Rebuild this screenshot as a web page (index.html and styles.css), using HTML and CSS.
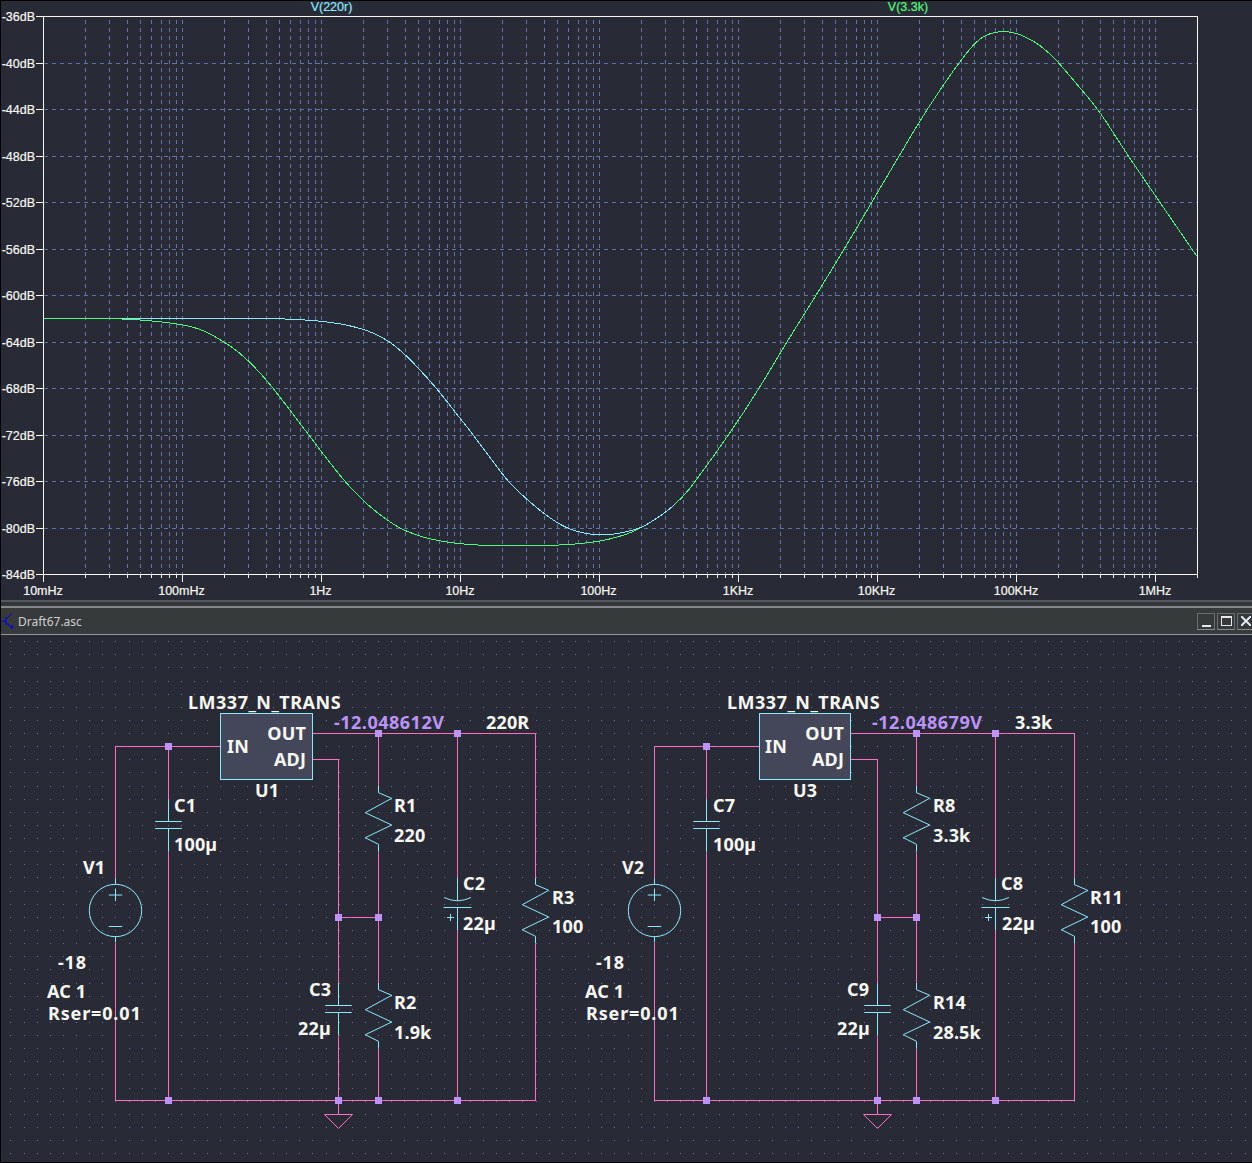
FILE: index.html
```html
<!DOCTYPE html>
<html lang="en">
<head>
  <meta charset="UTF-8">
  <title>Draft67.asc</title>
  <link rel="stylesheet" href="styles.css">
</head>
<body>
  <div class="page">
    <!-- waveform pane -->
    <svg class="plot" viewBox="1 1 1251 599" width="1251" height="599">
      <defs>
        <g id="decade">
          <path class="grid" d="M41.8 20V574M66.3 20V574M83.7 20V574M97.2 20V574M108.1 20V574M117.5 20V574M125.5 20V574M132.6 20V574M139 20V574"/>
          <path class="axis" d="M41.8 574V578M66.3 574V578M83.7 574V578M97.2 574V578M108.1 574V578M117.5 574V578M125.5 574V578M132.6 574V578M139 574V582"/>
        </g>
      </defs>

      <path class="grid" d="M44 63.5H1197M44 109.5H1197M44 156.5H1197M44 202.5H1197M44 249.5H1197M44 295.5H1197M44 342.5H1197M44 388.5H1197M44 435.5H1197M44 481.5H1197M44 528.5H1197"/>
      <use href="#decade" x="43.5"/>
      <use href="#decade" x="182.5"/>
      <use href="#decade" x="321.5"/>
      <use href="#decade" x="460.5"/>
      <use href="#decade" x="599.5"/>
      <use href="#decade" x="738.5"/>
      <use href="#decade" x="877.5"/>
      <use href="#decade" x="1016.5"/>
      <path class="axis" d="M1197.5 574V578M43.5 574V582"/>
      <path class="grid" d="M1155.5 20V574"/>
      <rect class="axis" x="43.5" y="16.5" width="1154" height="558"/>
      <path class="axis" d="M36 16.5H43M36 63.5H43M36 109.5H43M36 156.5H43M36 202.5H43M36 249.5H43M36 295.5H43M36 342.5H43M36 388.5H43M36 435.5H43M36 481.5H43M36 528.5H43M36 574.5H43"/>

      <path class="trace trace-green" d="M44 318.5L100 318.5Q121 318.7 138 319.85Q155 321 169.15 322.85Q183.3 324.7 193.3 327.35Q203.3 330 214.15 336.15Q225 342.3 232.5 347.65Q240 353 248.35 361Q256.7 369 265 378.65Q273.3 388.3 282.15 399.9Q291 411.5 300.15 423.6Q309.3 435.7 318.15 447.35Q327 459 336 470.35Q345 481.7 352.5 489.6Q360 497.5 368 504.75Q376 512 386.35 519.5Q396.7 527 406.7 531.15Q416.7 535.3 425 537.5Q433.3 539.7 441.65 541.2Q450 542.7 458.35 543.5Q466.7 544.3 473.35 544.8Q480 545.3 520 545.3Q560 545.3 568.35 544.65Q576.7 544 588.35 542.65Q600 541.3 608.35 539.3Q616.7 537.3 625 534.65Q633.3 532 641.65 527.35Q650 522.7 658.35 517.2Q666.7 511.7 675 504.2Q683.3 496.7 689.15 489.2Q695 481.7 711.65 458.7Q728.3 435.7 743.8 412Q759.3 388.3 772.9 365.3Q786.5 342.3 801.25 318.9Q816 295.5 830 272.5Q844 249.5 857.85 226Q871.7 202.5 885.35 179.25Q899 156 912.85 132.75Q926.7 109.5 942.5 86.4Q958.3 63.3 967.5 52Q976.7 40.7 983.35 36.85Q990 33 996.65 32.15Q1003.3 31.3 1010 32.15Q1016.7 33 1025 36.85Q1033.3 40.7 1040 45.7Q1046.7 50.7 1053 57Q1059.3 63.3 1069.65 75.65Q1080 88 1089.15 98.65Q1098.3 109.3 1113.3 132.8Q1128.3 156.3 1144.15 179.3Q1160 202.3 1176 225.8Q1192 249.3 1196.7 256"/>
      <path class="trace trace-cyan" d="M121 318.5L260 318.5Q286.7 318.8 303.35 319.9Q320 321 330 322.35Q340 323.7 348.35 325.5Q356.7 327.3 365 330Q373.3 332.7 381.65 337.2Q390 341.7 398.35 348.85Q406.7 356 413.35 363Q420 370 428.35 379.15Q436.7 388.3 445.85 400.15Q455 412 464.5 423.85Q474 435.7 482.5 447.35Q491 459 499.65 470.35Q508.3 481.7 514.15 487.35Q520 493 526.65 499Q533.3 505 541.65 511.65Q550 518.3 558.35 523.3Q566.7 528.3 575 530.8Q583.3 533.3 591.65 534.3Q600 535.3 608.35 534.65Q616.7 534 625 532Q633.3 530 641.65 527.35Q650 522.7 658.35 517.2Q666.7 511.7 675 504.2"/>

      <text class="plot-label trace-label-cyan" x="331.5" y="11" text-anchor="middle">V(220r)</text>
      <text class="plot-label trace-label-green" x="908" y="11" text-anchor="middle">V(3.3k)</text>

      <g class="plot-label" text-anchor="end">
        <text x="35" y="21">-36dB</text>
        <text x="35" y="68">-40dB</text>
        <text x="35" y="114">-44dB</text>
        <text x="35" y="161">-48dB</text>
        <text x="35" y="207">-52dB</text>
        <text x="35" y="254">-56dB</text>
        <text x="35" y="300">-60dB</text>
        <text x="35" y="347">-64dB</text>
        <text x="35" y="393">-68dB</text>
        <text x="35" y="440">-72dB</text>
        <text x="35" y="486">-76dB</text>
        <text x="35" y="533">-80dB</text>
        <text x="35" y="579">-84dB</text>
      </g>
      <g class="plot-label" text-anchor="middle">
        <text x="43" y="595">10mHz</text>
        <text x="181.5" y="595">100mHz</text>
        <text x="320.5" y="595">1Hz</text>
        <text x="460" y="595">10Hz</text>
        <text x="598.5" y="595">100Hz</text>
        <text x="738" y="595">1KHz</text>
        <text x="876.5" y="595">10KHz</text>
        <text x="1016" y="595">100KHz</text>
        <text x="1155" y="595">1MHz</text>
      </g>
    </svg>

    <div class="splitter"></div>

    <div class="titlebar">
      <svg class="app-icon" viewBox="0 0 14 18" width="14" height="18">
        <path d="M1 9H5M5 5V13M5 7L11 1M5 11L12 16M12 16L9 15.6M12 16L11 13"/>
      </svg>
      <span class="doc-name">Draft67.asc</span>
      <div class="win-buttons">
        <div class="win-btn"><span class="glyph-min"></span></div>
        <div class="win-btn"><span class="glyph-max"></span></div>
        <div class="win-btn">
          <svg class="glyph-close" viewBox="0 0 10 10" width="10" height="10"><path d="M0 0L10 10M10 0L0 10"/></svg>
        </div>
      </div>
    </div>

    <!-- schematic pane -->
    <svg class="schematic" viewBox="1 635 1251 527" width="1251" height="527">
      <defs>
        <rect id="junction" class="junction" x="-3.5" y="-3.5" width="7" height="7"/>
        <path id="resistor" class="part" d="M0 0V6.7L13.2 12.3L-13.2 26.7L13.2 39L-13.2 51.7L0 58.3V65.6"/>
        <path id="cap" class="part" d="M0 0V22M-13.3 22H13.3M-13.3 29H13.3M0 29V52"/>
        <path id="polar-cap" class="part" d="M0 0V22.7M-13.5 19.5Q0 26 13.5 19.5M-14 29.5H14M0 29.5V52M-10.5 39.5H-3.5M-7 36V43"/>
        <g id="source" class="part">
          <circle r="26.2"/>
          <path d="M0 -32V-26M0 26V32M-6.7 -15.5H6.7M0 -22V-9.5M-6.7 16H6.7"/>
        </g>
        <path id="ground" class="wire" d="M0 0V14M-14 14H14L0 28Z"/>
      </defs>

      <!-- grid dots, one dashed row per grid step -->
      <path class="dots" d="M10.4 641.6H1252M10.4 654.7H1252M10.4 667.9H1252M10.4 681H1252M10.4 694.1H1252M10.4 707.3H1252M10.4 720.4H1252M10.4 733.5H1252M10.4 746.6H1252M10.4 759.8H1252M10.4 772.9H1252M10.4 786H1252M10.4 799.2H1252M10.4 812.3H1252M10.4 825.4H1252M10.4 838.6H1252M10.4 851.7H1252M10.4 864.8H1252M10.4 877.9H1252M10.4 891.1H1252M10.4 904.2H1252M10.4 917.3H1252M10.4 930.5H1252M10.4 943.6H1252M10.4 956.7H1252M10.4 969.9H1252M10.4 983H1252M10.4 996.1H1252M10.4 1009.2H1252M10.4 1022.4H1252M10.4 1035.5H1252M10.4 1048.6H1252M10.4 1061.8H1252M10.4 1074.9H1252M10.4 1088H1252M10.4 1101.2H1252M10.4 1114.3H1252M10.4 1127.4H1252M10.4 1140.6H1252M10.4 1153.7H1252"/>

      <!-- 220R stage -->
      <path class="wire" d="M115.5 878.5V746.5H220.5M115.5 942.5V1100.5H535.5V943.6M535.5 878V733.5H312.5M168.5 746.5V799.5M168.5 851.5V1100.5M312.5 759.5H338.5V983.5M338.5 1035.5V1100.5M378.5 733.5V786M378.5 851.6V983M378.5 1048.6V1100.5M338.5 917.5H378.5M457.5 733.5V878M457.5 930V1100.5"/>
      <use href="#source" x="115.5" y="910.5"/>
      <use href="#cap" x="168.5" y="799.5"/>
      <use href="#cap" x="338.5" y="983.5"/>
      <use href="#polar-cap" x="457.5" y="878"/>
      <use href="#resistor" x="378.5" y="786"/>
      <use href="#resistor" x="378.5" y="983"/>
      <use href="#resistor" x="535.5" y="878"/>
      <use href="#ground" x="338.5" y="1100.5"/>
      <rect class="regulator" x="220.5" y="713.5" width="92" height="66"/>
      <use href="#junction" x="168.5" y="746.5"/>
      <use href="#junction" x="378.5" y="733.5"/>
      <use href="#junction" x="457.5" y="733.5"/>
      <use href="#junction" x="338.5" y="917.5"/>
      <use href="#junction" x="378.5" y="917.5"/>
      <use href="#junction" x="168.5" y="1100.5"/>
      <use href="#junction" x="338.5" y="1100.5"/>
      <use href="#junction" x="378.5" y="1100.5"/>
      <use href="#junction" x="457.5" y="1100.5"/>
      <g class="sch-text">
        <text class="wide" x="188" y="709">LM337_N_TRANS</text>
        <text x="227" y="753">IN</text>
        <text x="306" y="740" text-anchor="end">OUT</text>
        <text x="306" y="766" text-anchor="end">ADJ</text>
        <text x="255" y="797">U1</text>
        <text x="174" y="812">C1</text>
        <text x="174" y="851">100µ</text>
        <text x="83" y="874">V1</text>
        <text x="486" y="729">220R</text>
        <text x="394" y="812">R1</text>
        <text x="394" y="842">220</text>
        <text x="463" y="890">C2</text>
        <text x="463" y="930">22µ</text>
        <text x="552" y="904">R3</text>
        <text x="552" y="933">100</text>
        <text class="wider" x="58" y="969">-18</text>
        <text x="47" y="998">AC 1</text>
        <text class="wider" x="48" y="1020">Rser=0.01</text>
        <text x="309" y="996">C3</text>
        <text x="298" y="1035">22µ</text>
        <text x="394" y="1009">R2</text>
        <text x="394" y="1039">1.9k</text>
      </g>
      <text class="sch-text node-volts wide" x="334" y="729">-12.048612V</text>

      <!-- 3.3k stage -->
      <path class="wire" d="M654.5 878.5V746.5H759.5M654.5 942.5V1100.5H1074.5V943.6M1074.5 878V733.5H850.5M706.5 746.5V799.5M706.5 851.5V1100.5M850.5 759.5H877.5V983.5M877.5 1035.5V1100.5M916.5 733.5V786M916.5 851.6V983M916.5 1048.6V1100.5M877.5 917.5H916.5M995.5 733.5V878M995.5 930V1100.5"/>
      <use href="#source" x="654.5" y="910.5"/>
      <use href="#cap" x="706.5" y="799.5"/>
      <use href="#cap" x="877.5" y="983.5"/>
      <use href="#polar-cap" x="995.5" y="878"/>
      <use href="#resistor" x="916.5" y="786"/>
      <use href="#resistor" x="916.5" y="983"/>
      <use href="#resistor" x="1074.5" y="878"/>
      <use href="#ground" x="877.5" y="1100.5"/>
      <rect class="regulator" x="759.5" y="713.5" width="91" height="66"/>
      <use href="#junction" x="706.5" y="746.5"/>
      <use href="#junction" x="916.5" y="733.5"/>
      <use href="#junction" x="995.5" y="733.5"/>
      <use href="#junction" x="877.5" y="917.5"/>
      <use href="#junction" x="916.5" y="917.5"/>
      <use href="#junction" x="706.5" y="1100.5"/>
      <use href="#junction" x="877.5" y="1100.5"/>
      <use href="#junction" x="916.5" y="1100.5"/>
      <use href="#junction" x="995.5" y="1100.5"/>
      <g class="sch-text">
        <text class="wide" x="727" y="709">LM337_N_TRANS</text>
        <text x="765" y="753">IN</text>
        <text x="844" y="740" text-anchor="end">OUT</text>
        <text x="844" y="766" text-anchor="end">ADJ</text>
        <text x="793" y="797">U3</text>
        <text x="713" y="812">C7</text>
        <text x="713" y="851">100µ</text>
        <text x="622" y="874">V2</text>
        <text x="1015" y="729">3.3k</text>
        <text x="933" y="812">R8</text>
        <text x="933" y="842">3.3k</text>
        <text x="1001" y="890">C8</text>
        <text x="1002" y="930">22µ</text>
        <text x="1090" y="904">R11</text>
        <text x="1090" y="933">100</text>
        <text class="wider" x="596" y="969">-18</text>
        <text x="585" y="998">AC 1</text>
        <text class="wider" x="586" y="1020">Rser=0.01</text>
        <text x="847" y="996">C9</text>
        <text x="837" y="1035">22µ</text>
        <text x="933" y="1009">R14</text>
        <text x="933" y="1039">28.5k</text>
      </g>
      <text class="sch-text node-volts wide" x="872" y="729">-12.048679V</text>
    </svg>
  </div>
</body>
</html>
```
FILE: styles.css
```css
html, body {
  margin: 0;
  padding: 0;
  background: #282a36;
  overflow: hidden;
}
.page {
  width: 1251px;
  height: 1161px;
  border: 1px solid #000;
  border-right: none;
  background: #282a36;
}
svg {
  display: block;
}

/* plot pane */
.grid {
  fill: none;
  stroke: #6272a4;
  stroke-width: 1;
  stroke-dasharray: 4 4;
  shape-rendering: crispEdges;
}
.axis {
  fill: none;
  stroke: #f8f8f2;
  stroke-width: 1;
  shape-rendering: crispEdges;
}
.trace {
  fill: none;
  stroke-width: 1;
  shape-rendering: crispEdges;
}
.trace-green {
  stroke: #50fa7b;
}
.trace-cyan {
  stroke: #8be9fd;
}
.plot-label {
  font-family: "Liberation Sans", Arial, sans-serif;
  font-size: 12.5px;
  fill: #f8f8f2;
  stroke: #f8f8f2;
  stroke-width: 0.2px;
}
.trace-label-cyan {
  fill: #8be9fd;
  stroke: #8be9fd;
}
.trace-label-green {
  fill: #50fa7b;
  stroke: #50fa7b;
}

/* splitter and document title bar */
.splitter {
  height: 8px;
  box-sizing: border-box;
  background: #33363a;
  border-top: 2px solid #55585c;
  border-bottom: 2px solid #85888c;
}
.titlebar {
  display: flex;
  align-items: center;
  height: 26px;
  background: #363a3a;
  border-bottom: 1px solid #999;
  overflow: hidden;
}
.app-icon {
  flex-shrink: 0;
  margin-right: 3px;
}
.app-icon path {
  fill: none;
  stroke: #0000ff;
  stroke-width: 1;
}
.doc-name {
  font-family: "Noto Sans", sans-serif;
  font-size: 12px;
  color: #d0d0d0;
}
.win-buttons {
  display: flex;
  gap: 2px;
  margin-left: auto;
  margin-right: -3px;
  flex-shrink: 0;
}
.win-btn {
  display: flex;
  align-items: center;
  justify-content: center;
  width: 18px;
  height: 17px;
  box-sizing: border-box;
  border: 1px solid #6a6d70;
  border-bottom-color: #8a8d90;
}
.glyph-min {
  width: 9px;
  height: 2px;
  margin-top: 10px;
  background: #e8e8e8;
}
.glyph-max {
  width: 11px;
  height: 10px;
  box-sizing: border-box;
  border: 1px solid #e8e8e8;
  border-top-width: 2px;
}
.glyph-close path {
  fill: none;
  stroke: #dceaf5;
  stroke-width: 2;
}

/* schematic pane */
.dots {
  fill: none;
  stroke: #6272a4;
  stroke-width: 1;
  stroke-dasharray: 1 12.13;
  shape-rendering: crispEdges;
}
.wire {
  fill: none;
  stroke: #ff6fc0;
  stroke-width: 1;
  shape-rendering: crispEdges;
}
#ground {
  shape-rendering: auto;
}
.part {
  fill: none;
  stroke: #8be9fd;
  stroke-width: 1;
}
.regulator {
  fill: #44475a;
  stroke: #8be9fd;
  stroke-width: 1;
  shape-rendering: crispEdges;
}
.junction {
  fill: #bd93f9;
  shape-rendering: crispEdges;
}
.sch-text {
  font-family: "Noto Sans", sans-serif;
  font-size: 18px;
  font-weight: 700;
  letter-spacing: 0.15px;
  fill: #f8f8f2;
}
.sch-text .wide,
.sch-text.wide {
  letter-spacing: 0.5px;
}
.sch-text .wider {
  letter-spacing: 0.85px;
}
.node-volts {
  fill: #bd93f9;
}
```
